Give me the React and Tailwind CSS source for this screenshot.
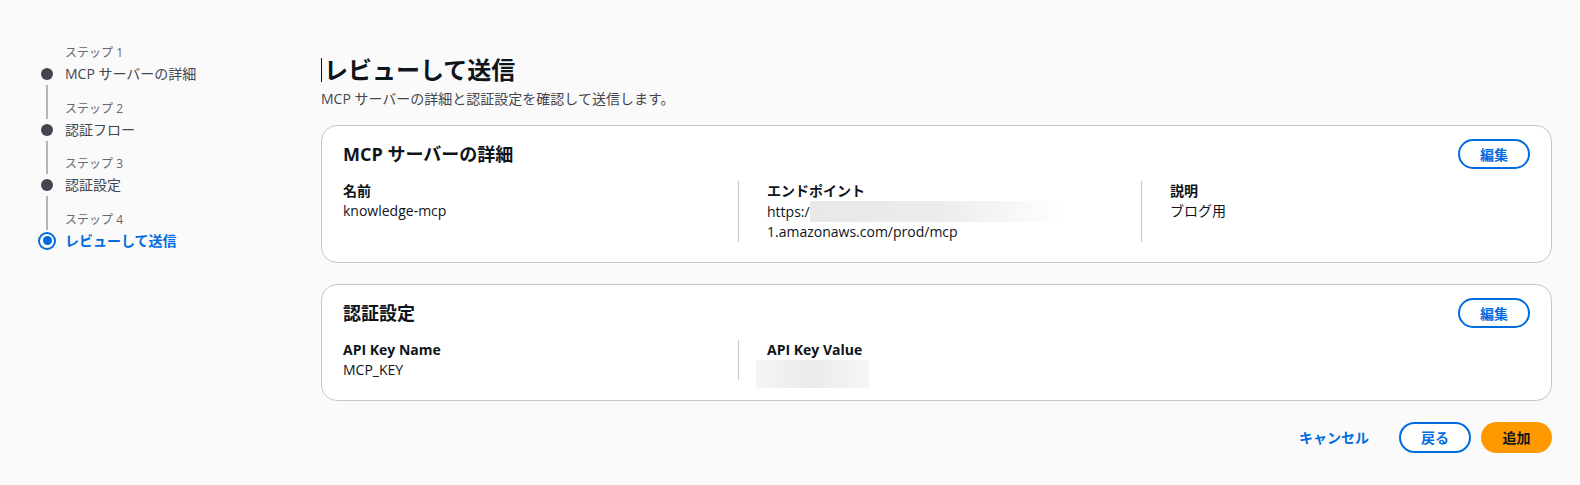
import React from "react";

const steps = [
  { no: 1, label: "MCP サーバーの詳細" },
  { no: 2, label: "認証フロー" },
  { no: 3, label: "認証設定" },
  { no: 4, label: "レビューして送信", active: true },
];

const font = { fontFamily: '"Open Sans", "Noto Sans CJK JP", sans-serif' };

const Steps = () => {
  return (
    <nav className="w-[321px] shrink-0 pl-[38px] pt-[43px]">
      <ul>
        {steps.map((step, i) => (
          <li key={step.no} className="flex">
            <div className="w-[18px] shrink-0 flex flex-col items-center">
              <div className={`h-[20px] w-[2px] ${i > 0 ? "bg-[#b4b4bb]" : ""}`} />
              <div className="h-[22px] flex items-center justify-center">
                {step.active ? (
                  <span className="w-[18px] h-[18px] rounded-full border-[2.5px] border-[#006ce0] bg-white flex items-center justify-center">
                    <span className="w-[9px] h-[9px] rounded-full bg-[#006ce0]" />
                  </span>
                ) : (
                  <span className="w-[12px] h-[12px] rounded-full bg-[#424650]" />
                )}
              </div>
              <div className={`flex-1 w-[2px] ${i < steps.length - 1 ? "bg-[#b4b4bb]" : ""}`} />
            </div>
            <div className="pl-[9px] pb-[13.5px]">
              <div className="text-[12px] leading-[20px] text-[#656871]">ステップ {step.no}</div>
              <div
                className={`text-[14px] leading-[22px] ${
                  step.active ? "font-bold text-[#006ce0]" : "text-[#424650]"
                }`}
              >
                {step.label}
              </div>
            </div>
          </li>
        ))}
      </ul>
    </nav>
  );
};

const EditButton = () => (
  <button className="w-[72px] h-[30px] rounded-full border-2 border-[#006ce0] bg-white text-[14px] font-bold text-[#006ce0]">
    編集
  </button>
);

const Card = ({ title, children }) => (
  <section className="bg-white border border-[#c6c6cd] rounded-[16px] px-[21px] pt-[13px] pb-[20px]">
    <div className="flex items-center justify-between h-[30px]">
      <h2 className="text-[18px] leading-[24px] font-bold text-[#0f141a]">{title}</h2>
      <EditButton />
    </div>
    <div className="mt-[12px] grid grid-cols-[395px_403px_1fr]">{children}</div>
  </section>
);

const Item = ({ label, first, children }) => (
  <div className={first ? "pr-[20px]" : "border-l border-[#c6c6cd] pl-[28px] pr-[20px]"}>
    <div className="text-[14px] leading-[20px] font-bold text-[#0f141a]">{label}</div>
    <div className="text-[14px] leading-[20px] text-[#0f141a]">{children}</div>
  </div>
);

export default function App() {
  return (
    <div className="min-h-screen bg-[#fafafa] flex" style={font}>
      <Steps />
      <main className="flex-1 pr-[28px] pt-[55px]">
        <h1 className="text-[24px] leading-[30px] font-bold text-[#0f141a] flex items-center">
          <span className="inline-block w-px h-[24px] bg-[#0f141a] mr-[2px]" />
          レビューして送信
        </h1>
        <p className="mt-[4px] text-[14px] leading-[20px] text-[#424650]">
          MCP サーバーの詳細と認証設定を確認して送信します。
        </p>

        <div className="mt-[16px]">
          <Card title="MCP サーバーの詳細">
            <Item label="名前" first>
              knowledge-mcp
            </Item>
            <Item label="エンドポイント">
              <div className="flex items-center">
                https:/
                <span className="inline-block w-[256px] h-[21px] bg-gradient-to-r from-[#e8e8e8] via-[#ececec] to-white" />
              </div>
              <div>1.amazonaws.com/prod/mcp</div>
            </Item>
            <Item label="説明">ブログ用</Item>
          </Card>
        </div>

        <div className="mt-[21px]">
          <Card title="認証設定">
            <Item label="API Key Name" first>
              MCP_KEY
            </Item>
            <Item label="API Key Value">
              <div className="-ml-[11px] w-[113px] h-[28px] -mb-[8px] bg-gradient-to-r from-[#f4f4f4] via-[#ebebeb] to-[#f6f6f6]" />
            </Item>
          </Card>
        </div>

        <div className="mt-[21px] flex items-center justify-end">
          <button className="text-[14px] font-bold text-[#006ce0] mr-[30px]">キャンセル</button>
          <button className="w-[72px] h-[31px] rounded-full border-2 border-[#006ce0] bg-white text-[14px] font-bold text-[#006ce0] mr-[10px]">
            戻る
          </button>
          <button className="w-[71px] h-[31px] rounded-full bg-[#ff9900] text-[14px] font-bold text-[#0f141a]">
            追加
          </button>
        </div>
      </main>
    </div>
  );
}
